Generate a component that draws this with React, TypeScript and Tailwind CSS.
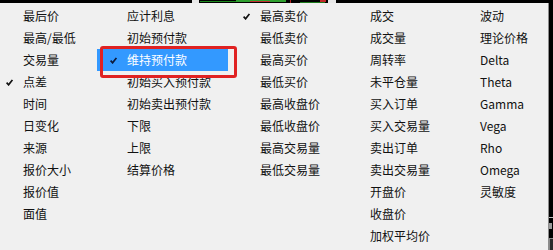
type Item = { label: string; checked?: boolean; active?: boolean };
type Column = { width: string; gutter: string; checkPad: string; items: Item[] };

const columns: Column[] = [
  {
    width: "w-[97px]",
    gutter: "w-[23px]",
    checkPad: "pl-[6px]",
    items: [
      { label: "最后价" },
      { label: "最高/最低" },
      { label: "交易量" },
      { label: "点差", checked: true },
      { label: "时间" },
      { label: "日变化" },
      { label: "来源" },
      { label: "报价大小" },
      { label: "报价值" },
      { label: "面值" },
    ],
  },
  {
    width: "w-[131px]",
    gutter: "w-[30px]",
    checkPad: "pl-[13px]",
    items: [
      { label: "应计利息" },
      { label: "初始预付款" },
      { label: "维持预付款", checked: true, active: true },
      { label: "初始买入预付款" },
      { label: "初始卖出预付款" },
      { label: "下限" },
      { label: "上限" },
      { label: "结算价格" },
    ],
  },
  {
    width: "w-[110px]",
    gutter: "w-[32px]",
    checkPad: "pl-[15px]",
    items: [
      { label: "最高卖价", checked: true },
      { label: "最低卖价" },
      { label: "最高买价" },
      { label: "最低买价" },
      { label: "最高收盘价" },
      { label: "最低收盘价" },
      { label: "最高交易量" },
      { label: "最低交易量" },
    ],
  },
  {
    width: "w-[110px]",
    gutter: "w-[32px]",
    checkPad: "pl-[15px]",
    items: [
      { label: "成交" },
      { label: "成交量" },
      { label: "周转率" },
      { label: "未平仓量" },
      { label: "买入订单" },
      { label: "买入交易量" },
      { label: "卖出订单" },
      { label: "卖出交易量" },
      { label: "开盘价" },
      { label: "收盘价" },
      { label: "加权平均价" },
    ],
  },
  {
    width: "flex-1",
    gutter: "w-[32px]",
    checkPad: "pl-[15px]",
    items: [
      { label: "波动" },
      { label: "理论价格" },
      { label: "Delta" },
      { label: "Theta" },
      { label: "Gamma" },
      { label: "Vega" },
      { label: "Rho" },
      { label: "Omega" },
      { label: "灵敏度" },
    ],
  },
];

function Check({ color }: { color: string }) {
  return (
    <svg width="7" height="7" viewBox="0 0 7 7">
      <path d="M0.6 3.6 L2.6 5.8 L6.4 0.9" fill="none" stroke={color} strokeWidth="1.7" />
    </svg>
  );
}

function MenuItem({ item, gutter, checkPad }: { item: Item; gutter: string; checkPad: string }) {
  return (
    <div
      className={`flex h-[22px] items-center ${
        item.active ? "bg-[#3399ff] text-white" : "text-[#111]"
      }`}
    >
      <div className={`flex shrink-0 items-center ${gutter} ${checkPad}`}>
        {item.checked && <Check color={item.active ? "#0d1a3a" : "#111"} />}
      </div>
      <span className="whitespace-nowrap text-[12px] leading-none">{item.label}</span>
    </div>
  );
}

export default function App() {
  return (
    <div
      className="relative flex h-[250px] w-[553px] flex-col overflow-hidden bg-black"
      style={{ fontFamily: '"Noto Sans CJK SC", "Open Sans", sans-serif' }}
    >
      {/* chart edge peeking above the menu */}
      <svg width="553" height="3" className="shrink-0">
        <rect x="192" y="0" width="7" height="3" fill="#e8e8e8" />
        <rect x="328" y="0" width="8" height="3" fill="#e8e8e8" />
        <rect x="200" y="1" width="40" height="1" fill="#1c8a1c" />
        <rect x="236" y="0" width="50" height="2" fill="#2fa02f" />
        <rect x="250" y="1" width="20" height="1" fill="#c03030" />
        <rect x="290" y="0" width="1" height="3" fill="#b02020" />
        <rect x="320" y="0" width="6" height="2" fill="#c02828" />
        <rect x="300" y="2" width="25" height="1" fill="#1c7a1c" />
      </svg>

      <div className="flex flex-1">
        {/* menu */}
        <div className="flex w-[549px] border-r border-[#8c8c8c] bg-[#f0f0f0] pt-[2px]">
          {columns.map((col, i) => (
            <div key={i} className={`flex flex-col ${col.width}`}>
              {col.items.map((item) => (
                <MenuItem key={item.label} item={item} gutter={col.gutter} checkPad={col.checkPad} />
              ))}
            </div>
          ))}
        </div>

        {/* window beyond the menu */}
        <div className="flex flex-1 flex-col">
          <div className="h-[214px]" />
          <div className="h-px bg-[#bdbdbd]" />
          <div className="mt-[5px] h-[6px] w-[3px] bg-[#9a9a9a]" />
          <div className="mt-[9px] h-[12px] border-l border-t border-[#8a8a8a] bg-[#2a2a2a]" />
        </div>
      </div>

      {/* annotation box */}
      <div className="absolute left-[100px] top-[46px] h-[32px] w-[137px] rounded-[3px] border-[3px] border-[#e02222]" />
    </div>
  );
}
